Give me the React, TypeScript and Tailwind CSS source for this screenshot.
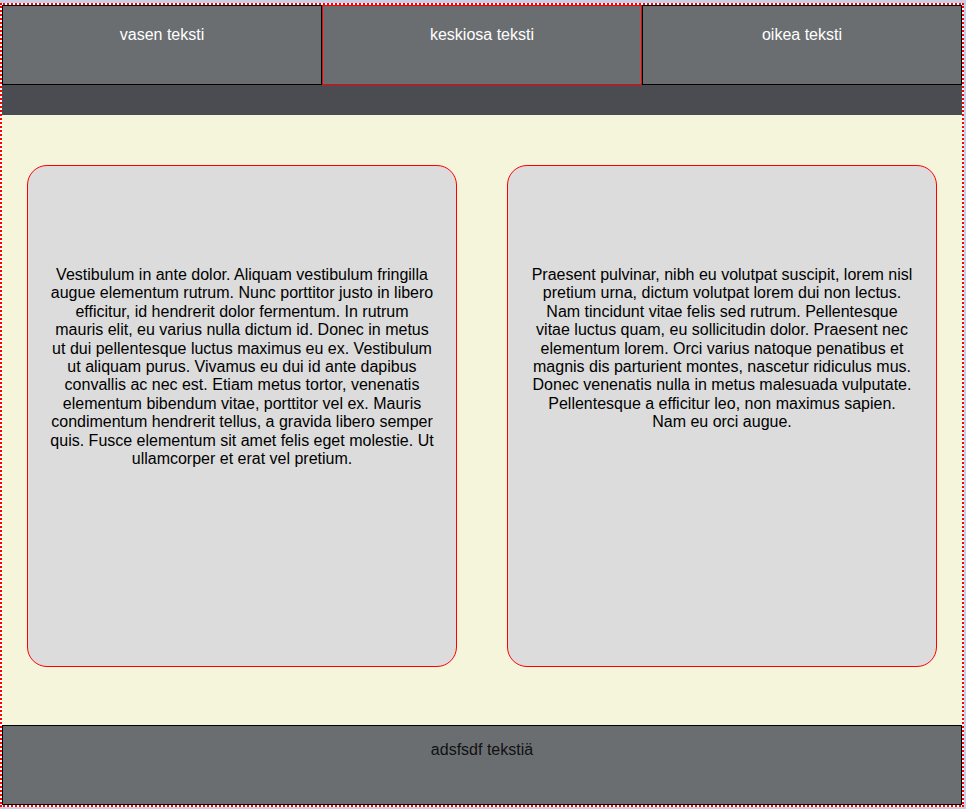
const leftText =
  'Vestibulum in ante dolor. Aliquam vestibulum fringilla augue elementum rutrum. Nunc porttitor justo in libero efficitur, id hendrerit dolor fermentum. In rutrum mauris elit, eu varius nulla dictum id. Donec in metus ut dui pellentesque luctus maximus eu ex. Vestibulum ut aliquam purus. Vivamus eu dui id ante dapibus convallis ac nec est. Etiam metus tortor, venenatis elementum bibendum vitae, porttitor vel ex. Mauris condimentum hendrerit tellus, a gravida libero semper quis. Fusce elementum sit amet felis eget molestie. Ut ullamcorper et erat vel pretium.';

const rightText =
  'Praesent pulvinar, nibh eu volutpat suscipit, lorem nisl pretium urna, dictum volutpat lorem dui non lectus. Nam tincidunt vitae felis sed rutrum. Pellentesque vitae luctus quam, eu sollicitudin dolor. Praesent nec elementum lorem. Orci varius natoque penatibus et magnis dis parturient montes, nascetur ridiculus mus. Donec venenatis nulla in metus malesuada vulputate. Pellentesque a efficitur leo, non maximus sapien. Nam eu orci augue.';

const HeaderCell = ({ label, active }: { label: string; active?: boolean }) => (
  <div
    className={`h-[80px] bg-[#6b6e71] border pt-[20px] text-center text-white ${
      active ? 'border-[#ff0000]' : 'border-black'
    }`}
  >
    {label}
  </div>
);

const Card = ({ text }: { text: string }) => (
  <div className="h-[502px] bg-[#dcdcdc] border border-[#ff0000] rounded-[20px] pt-[100px] px-[22.25px] text-center text-black">
    {text}
  </div>
);

export default function App() {
  return (
    <div
      className="min-h-screen bg-[#c9cee8] pt-[3px]"
      style={{ fontFamily: '"Liberation Sans", Arial, sans-serif' }}
    >
      <div className="w-[964px] h-[804px] border-2 border-dotted border-[#ff0000] bg-white flex flex-col text-base leading-[1.15]">
        <div className="grid grid-cols-3">
          <HeaderCell label="vasen teksti" />
          <HeaderCell label="keskiosa teksti" active />
          <HeaderCell label="oikea teksti" />
        </div>
        <div className="h-[30px] bg-[#4a4c51]" />
        <div className="h-[610px] bg-[#f5f5dc] grid grid-cols-2 gap-[50px] px-[25px] pt-[50px]">
          <Card text={leftText} />
          <Card text={rightText} />
        </div>
        <div className="h-[80px] bg-[#6b6e71] border border-black pt-[15px] text-center text-[#111111]">
          adsfsdf tekstiä
        </div>
      </div>
    </div>
  );
}
